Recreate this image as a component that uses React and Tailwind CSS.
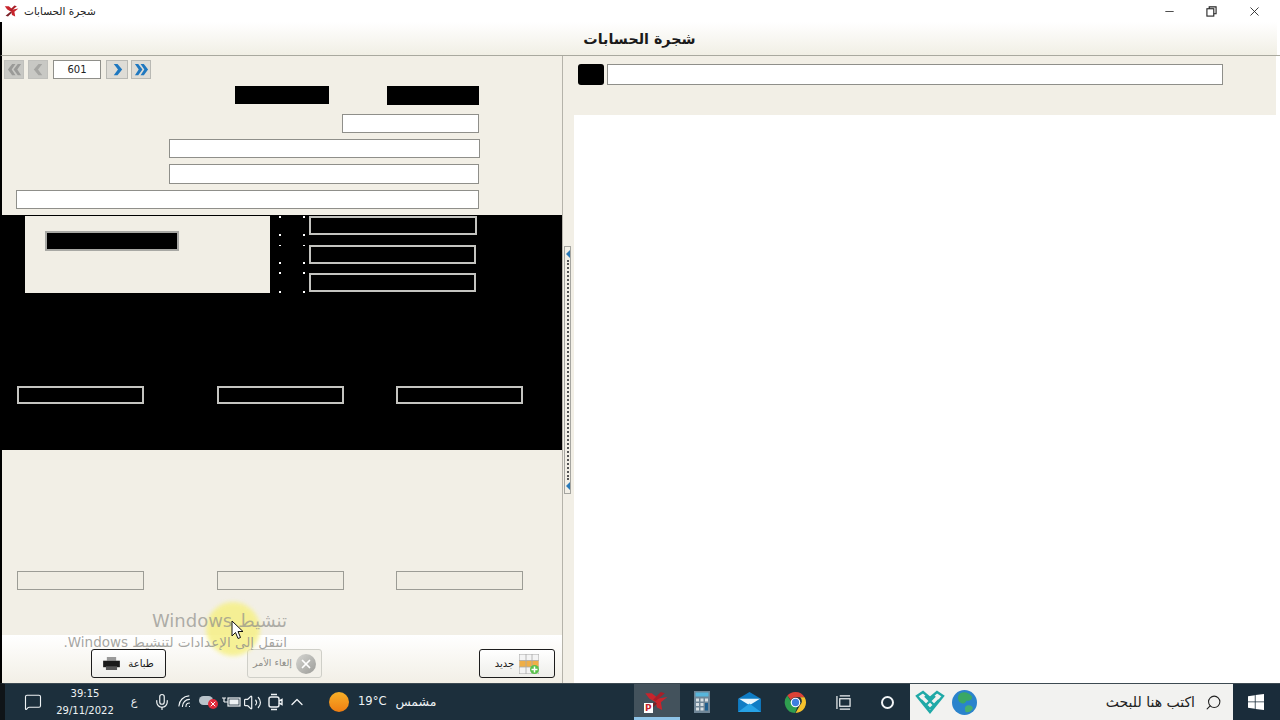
import React from "react";
import { MessageSquare, Mic, Wifi, Volume2, ChevronUp, Search, Minus, X } from "lucide-react";

const font = "font-['DejaVu_Sans','Noto_Sans',sans-serif]";

function AppIcon({ className }) {
  return (
    <svg viewBox="0 0 20 16" className={className}>
      <path d="M1 2 L6 2 L11 6 L18 5 L13 9 L14 15 L10 13 L9 9 L4 6 Z" fill="#c8242c" />
      <path d="M2 14 L8 9 L10 10 L5 15 Z" fill="#7a2026" />
      <path d="M13 1 L16 2 L9 8 L7 7 Z" fill="#a81e28" />
    </svg>
  );
}

function NavBtn({ children, className }) {
  return <div className={`flex items-center justify-center h-[19px] border ${className}`}>{children}</div>;
}

function Arrow({ double, left, color }) {
  return (
    <svg viewBox="0 0 16 16" className={`w-[15px] h-[15px] ${left ? "-scale-x-100" : ""}`} fill={color}>
      {double ? (
        <>
          <path d="M1 2H4.500L9 8L4.500 14H1L5 8Z" />
          <path d="M7 2H10.500L15 8L10.500 14H7L11 8Z" />
        </>
      ) : (
        <path d="M4 2H8L13 8L8 14H4L8.500 8Z" />
      )}
    </svg>
  );
}

function OutlineBox({ className }) {
  return <div className={`border-2 border-[#c4c4c0] bg-black ${className}`} />;
}

function Field({ className }) {
  return <div className={`bg-white border border-[#8f8f8a] ${className}`} />;
}

function Dot({ className }) {
  return <div className={`w-[2px] h-[2px] bg-white ${className}`} />;
}

function Btn({ className, children }) {
  return (
    <div className={`flex items-center justify-center h-[29px] rounded-[3px] border ${className}`}>
      {children}
    </div>
  );
}

function DotsColumn({ className }) {
  return (
    <div className={`flex flex-col ${className}`}>
      <Dot />
      <Dot className="mt-[16px]" />
      <Dot className="mt-[9px]" />
      <Dot className="mt-[16px]" />
      <Dot className="mt-[8px]" />
      <Dot className="mt-[17px]" />
    </div>
  );
}

function Chrome() {
  return (
    <svg viewBox="0 0 24 24" className="w-[23px] h-[23px]">
      <path d="M12 1a11 11 0 0 1 9.500 5.500H12a5.500 5.500 0 0 0-5 3L3.500 4.800A11 11 0 0 1 12 1z" fill="#dc4237" />
      <path d="M21.500 6.500A11 11 0 0 1 12 23l4.800-8.300a5.500 5.500 0 0 0 0-8.200z" fill="#f5c22c" />
      <path d="M3.500 4.800 L8 12 a5 5 0 0 0 6 4.500 L11.500 23 A11 11 0 0 1 3.500 4.800z" fill="#2f9e4f" />
      <circle cx="12" cy="12" r="5" fill="#fff" />
      <circle cx="12" cy="12" r="3.800" fill="#3f7fe0" />
    </svg>
  );
}

export default function App() {
  return (
    <div className={`relative w-[1280px] h-[720px] overflow-hidden flex flex-col bg-white ${font}`}>
      {/* title bar */}
      <div className="h-[22px] flex items-center bg-white">
        <AppIcon className="ml-[4px] w-[16px] h-[14px]" />
        <span className="ml-[4px] text-[10.500px] text-[#222] leading-none">شجرة الحسابات</span>
        <div className="ml-auto flex items-center">
          <Minus className="w-[13px] h-[13px] text-[#333] mr-[30px]" strokeWidth={1.6} />
          <svg viewBox="0 0 12 12" className="w-[11px] h-[11px] mr-[30px] text-[#222]" fill="none" stroke="currentColor" strokeWidth="1.200">
            <rect x="1" y="3" width="7.500" height="8" />
            <path d="M3.500 3V1H11V8.500H8.500" />
          </svg>
          <X className="w-[15px] h-[15px] text-[#222] mr-[18px]" strokeWidth={1.4} />
        </div>
      </div>
      {/* header */}
      <div className="h-[34px] flex border-b border-[#a9a99f] border-l-2 border-l-black">
        <div className="w-[1275px] bg-gradient-to-b from-white to-[#f1efe5] flex items-center justify-center">
          <span className="font-bold text-[14.300px] text-[#1a1a1a] leading-none mt-[2px]">شجرة الحسابات</span>
        </div>
        <div className="flex-1 bg-white" />
      </div>
      {/* main */}
      <div className="h-[627px] flex border-l-2 border-l-black">
        {/* left panel */}
        <div className="w-[560px] flex flex-col bg-[#f2efe6]">
          <div className="mt-[4px] h-[19px] flex items-center">
            <NavBtn className="ml-[2px] w-[20px] bg-[#c8c8c4] border-[#c0c0bc]"><Arrow double left color="#9a9a98" /></NavBtn>
            <NavBtn className="ml-[4px] w-[20px] bg-[#c8c8c4] border-[#c0c0bc]"><Arrow left color="#a5a5a2" /></NavBtn>
            <div className="ml-[5px] w-[48px] h-[19px] bg-white border border-[#8f8f8a] flex items-center justify-center text-[10px] text-[#222]">601</div>
            <NavBtn className="ml-[5px] w-[22px] bg-[#dedcd6] border-[#b9b9b4]"><Arrow color="#1f78c0" /></NavBtn>
            <NavBtn className="ml-[3px] w-[20px] bg-[#dedcd6] border-[#b9b9b4]"><Arrow double color="#1f78c0" /></NavBtn>
          </div>
          <div className="mt-[7px] h-[18px] flex">
            <div className="ml-[233px] w-[94px] bg-black" />
            <div className="ml-[58px] w-[92px] h-[19px] bg-black" />
          </div>
          <Field className="mt-[10px] ml-[340px] w-[137px] h-[19px]" />
          <Field className="mt-[6px] ml-[167px] w-[311px] h-[19px]" />
          <Field className="mt-[6px] ml-[167px] w-[310px] h-[20px]" />
          <Field className="mt-[6px] ml-[14px] w-[463px] h-[19px]" />
          {/* black block */}
          <div className="mt-[6px] h-[235px] bg-black flex flex-col">
            <div className="mt-[1px] h-[77px] flex">
              <div className="ml-[23px] w-[245px] h-[77px] bg-[#f1eee5] pt-[15px] pl-[20px]">
                <div className="w-[134px] h-[20px] bg-black border-2 border-[#a8a8a4]" />
              </div>
              <DotsColumn className="ml-[9px]" />
              <DotsColumn className="ml-[22px]" />
              <div className="ml-[4px] flex flex-col">
                <OutlineBox className="w-[168px] h-[19px]" />
                <OutlineBox className="mt-[10px] w-[167px] h-[19px]" />
                <OutlineBox className="mt-[9px] w-[167px] h-[19px]" />
              </div>
            </div>
            <div className="mt-[93px] flex">
              <OutlineBox className="ml-[15px] w-[127px] h-[18px]" />
              <OutlineBox className="ml-[73px] w-[127px] h-[18px]" />
              <OutlineBox className="ml-[52px] w-[127px] h-[18px]" />
            </div>
          </div>
          <div className="mt-[121px] flex">
            <div className="ml-[15px] w-[127px] h-[19px] bg-[#f0ede3] border border-[#9c9c95]" />
            <div className="ml-[73px] w-[127px] h-[19px] bg-[#f0ede3] border border-[#9c9c95]" />
            <div className="ml-[52px] w-[127px] h-[19px] bg-[#f0ede3] border border-[#9c9c95]" />
          </div>
          {/* bottom buttons */}
          <div className="mt-auto h-[48px] pt-[14px] flex bg-gradient-to-b from-white to-[#f2efe6]">
            <Btn className="ml-[89px] w-[75px] border-[#1c1c1c] bg-gradient-to-b from-white to-[#eeeeea] gap-[8px]">
              <svg viewBox="0 0 18 14" className="w-[17px] h-[13px]">
                <rect x="4" y="0" width="10" height="4" fill="#9a9a9a" />
                <rect x="0" y="4" width="18" height="7" fill="#1a1a1a" />
                <rect x="3" y="10" width="12" height="4" fill="#555" />
              </svg>
              <span className="text-[10px] text-[#111]">طباعة</span>
            </Btn>
            <Btn className="ml-[81px] w-[75px] border-[#cfcfc8] bg-[#f3f1ea] gap-[4px]">
              <span className="text-[9.500px] text-[#8d8d88] whitespace-nowrap">إلغاء الأمر</span>
              <div className="w-[20px] h-[20px] rounded-full bg-gradient-to-br from-[#d6d6d2] to-[#9c9c98] flex items-center justify-center">
                <X className="w-[14px] h-[14px] text-white" strokeWidth={3} />
              </div>
            </Btn>
            <Btn className="ml-[157px] w-[76px] border-[#1c1c1c] bg-gradient-to-b from-white to-[#eeeeea] gap-[5px]">
              <span className="text-[10px] text-[#111]">جديد</span>
              <svg viewBox="0 0 20 20" className="w-[20px] h-[20px]">
                <rect x="0" y="0" width="20" height="20" fill="#f4f4f4" stroke="#a8a8a8" />
                <rect x="0.500" y="6.500" width="19" height="6.500" fill="#efae47" />
                <path d="M7 0V20M13 0V20M0 6.500H20M0 13H20" stroke="#a8a8a8" strokeWidth="0.800" />
                <circle cx="15.500" cy="15.500" r="4.500" fill="#58c24a" />
                <path d="M15.500 12.500V18.500M12.500 15.500H18.500" stroke="#fff" strokeWidth="1.500" />
              </svg>
            </Btn>
          </div>
        </div>
        {/* splitter */}
        <div className="w-[12px] bg-[#f2efe6] border-l border-[#b5b3aa] flex items-center">
          <div className="ml-[1px] w-[7px] h-[248px] border border-[#a5a5a0] flex flex-col items-center justify-between py-[3px]">
            <div className="w-0 h-0 border-y-[4px] border-y-transparent border-r-[4px] border-r-[#2a7ab8]" />
            <div className="flex-1 my-[2px] border-l-2 border-dotted border-[#555]" />
            <div className="w-0 h-0 border-y-[4px] border-y-transparent border-r-[4px] border-r-[#2a7ab8]" />
          </div>
        </div>
        {/* right panel */}
        <div className="w-[702px] flex flex-col">
          <div className="h-[59px] bg-[#f2efe6] pt-[8px] flex">
            <div className="ml-[4px] w-[26px] h-[21px] rounded-[3px] bg-black" />
            <div className="ml-[3px] w-[616px] h-[21px] bg-white border border-[#8f8f8a]" />
          </div>
          <div className="flex-1 bg-white" />
        </div>
        <div className="flex-1 bg-white" />
      </div>
      {/* taskbar */}
      <div className="h-[37px] flex items-center bg-[#1c2f3c] text-[#eef2f4] border-l-[5px] border-l-[#0f1418] border-t border-t-[#3d4a52]">
        <MessageSquare className="ml-[19px] w-[18px] h-[18px]" strokeWidth={1.5} />
        <div className="ml-[14px] w-[58px] -mt-[1px] flex flex-col items-center text-[10px] leading-[17px]">
          <span>39:15</span>
          <span>29/11/2022</span>
        </div>
        <span className="ml-[10px] w-[20px] text-center text-[11px]">ع</span>
        <Mic className="ml-[9px] w-[18px] h-[18px]" strokeWidth={1.6} />
        <Wifi className="ml-[6px] w-[17px] h-[17px] -rotate-45" strokeWidth={1.6} />
        <div className="ml-[5px] w-[20px] h-[14px] relative">
          <div className="w-[14px] h-[9px] mt-[1px] rounded-full bg-[#b9c3ca]" />
          <div className="absolute right-[1px] bottom-0 w-[10px] h-[10px] rounded-full bg-[#e02a3a] flex items-center justify-center">
            <X className="w-[8px] h-[8px] text-white" strokeWidth={3} />
          </div>
        </div>
        <svg viewBox="0 0 20 14" className="ml-[2px] w-[20px] h-[14px]" fill="none" stroke="currentColor" strokeWidth="1.200">
          <rect x="7" y="3" width="12" height="8" />
          <rect x="9" y="5" width="8" height="4" fill="currentColor" />
          <path d="M7 7H3M3 3V7M1 3H5" />
        </svg>
        <Volume2 className="ml-[2px] w-[19px] h-[19px]" strokeWidth={1.5} />
        <svg viewBox="0 0 20 20" className="ml-[3px] w-[20px] h-[20px]" fill="none" stroke="currentColor" strokeWidth="1.400">
          <rect x="4" y="5" width="10" height="10" rx="2" />
          <path d="M6 2.500H12M6 17.500H12M14 9L17 7.500V12.500L14 11" />
        </svg>
        <ChevronUp className="ml-[2px] w-[20px] h-[20px]" strokeWidth={1.6} />
        <div className="ml-[22px] w-[20px] h-[20px] rounded-full bg-gradient-to-b from-[#f7b027] to-[#ee7d12]" />
        <span className="ml-[9px] text-[11.500px] whitespace-nowrap">19°C</span>
        <span className="ml-[9px] text-[12.500px] whitespace-nowrap">مشمس</span>
        <div className="flex-1" />
        {/* pinned */}
        <div className="w-[46px] h-full bg-[#43525c] border-b-[3px] border-b-[#8fc4e8] flex items-center justify-center relative">
          <AppIcon className="w-[26px] h-[22px]" />
          <span className="absolute left-[10px] bottom-[4px] bg-white text-[#c8242c] font-bold text-[9px] leading-[10px] px-[1px]">P</span>
        </div>
        <div className="ml-[10px] w-[24px] flex justify-center">
          <svg viewBox="0 0 16 22" className="w-[16px] h-[22px]">
            <rect width="16" height="22" fill="#6f8697" />
            <rect x="1.500" y="1.500" width="13" height="4" fill="#57b6dc" />
            <g fill="#d8e0e4">
              <rect x="2" y="7.500" width="3" height="3" /><rect x="6.500" y="7.500" width="3" height="3" /><rect x="11" y="7.500" width="3" height="3" />
              <rect x="2" y="12" width="3" height="3" /><rect x="6.500" y="12" width="3" height="3" />
              <rect x="2" y="16.500" width="3" height="3" /><rect x="6.500" y="16.500" width="3" height="3" />
            </g>
            <rect x="11" y="12" width="3" height="7.500" fill="#1f5f8f" />
          </svg>
        </div>
        <div className="ml-[23px] w-[24px] flex justify-center">
          <svg viewBox="0 0 24 21" className="w-[23px] h-[20px]">
            <path d="M0 7L12 0L24 7V21H0Z" fill="#0f7cc4" />
            <path d="M1 7H23L12 14Z" fill="#e8f6fd" />
            <path d="M0 21L12 12L24 21Z" fill="#27a3e6" />
          </svg>
        </div>
        <div className="ml-[22px] w-[24px] flex justify-center"><Chrome /></div>
        <div className="ml-[24px] w-[24px] flex justify-center">
          <svg viewBox="0 0 16 16" className="w-[15px] h-[15px]" fill="none" stroke="#eef2f4" strokeWidth="1.300">
            <rect x="4" y="4" width="11" height="8" />
            <path d="M1 1V15M4 1H15M4 15H15" />
          </svg>
        </div>
        <div className="ml-[20px] w-[24px] flex justify-center">
          <div className="w-[13px] h-[13px] rounded-full border-2 border-[#f2f5f7]" />
        </div>
        <div className="ml-[11px] w-[323px] h-full bg-[#f2f2f0] flex items-center text-[#222]">
          <svg viewBox="0 0 30 24" className="ml-[5px] w-[30px] h-[24px]" fill="none" stroke="#1fa9a7" strokeWidth="2.400">
            <path d="M2 6L8 2L15 8L22 2L28 6L15 22ZM6 10L15 19M24 10L15 19M10 6L20 16M20 6L10 16" />
          </svg>
          <svg viewBox="0 0 24 24" className="ml-[7px] w-[25px] h-[25px]">
            <circle cx="12" cy="12" r="12" fill="#2a83cc" />
            <path d="M8 3C12 1 17 3 19 6C20 9 17 11 14 10C13 13 10 14 8 12C5 10 5 5 8 3Z" fill="#3aa865" />
            <path d="M14 15C17 14 20 15 20 18C18 21 15 22 13 21C12 18 12 16 14 15Z" fill="#46b070" />
          </svg>
          <span className="ml-auto text-[14px] whitespace-nowrap">اكتب هنا للبحث</span>
          <Search className="ml-[10px] mr-[11px] w-[17px] h-[17px] -scale-x-100" strokeWidth={1.5} />
        </div>
        <div className="w-[47px] h-full flex items-center justify-center bg-[#1a2c3a]">
          <svg viewBox="0 0 16 16" className="w-[16px] h-[16px] -ml-[2px]" fill="#fff">
            <path d="M0 2.200L6.800 1.200V7.500H0ZM7.600 1.100L16 0V7.500H7.600ZM0 8.300H6.800V14.700L0 13.800ZM7.600 8.300H16V16L7.600 14.900Z" />
          </svg>
        </div>
      </div>
      {/* overlays */}
      <div className="absolute left-[206px] top-[602px] w-[54px] h-[54px] rounded-full bg-[#f6f08c] opacity-90 blur-[2px]" />
      <div dir="rtl" className="absolute right-[993px] top-[609px] text-[18px] leading-[24px] text-[#8e8e8a]/70 whitespace-nowrap">تنشيط Windows</div>
      <div dir="rtl" className="absolute right-[993px] top-[634px] text-[13.500px] leading-[17px] text-[#8e8e8a]/80 whitespace-nowrap">انتقل إلى الإعدادات لتنشيط Windows.</div>
      <svg viewBox="0 0 14 20" className="absolute left-[231px] top-[620px] w-[14px] h-[20px]">
        <path d="M1 1V16L4.500 12.500L7 18.500L9.500 17.500L7 11.500H12Z" fill="#fff" stroke="#111" strokeWidth="1" />
      </svg>
    </div>
  );
}
